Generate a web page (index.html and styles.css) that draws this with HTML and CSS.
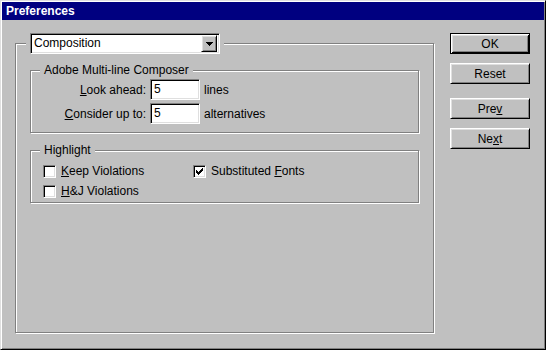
FILE: index.html
```html
<!DOCTYPE html>
<html lang="en">

<head>
  <meta charset="UTF-8">
  <meta name="viewport" content="width=device-width, initial-scale=1.0">
  <title>Preferences</title>
  <link rel="stylesheet" href="styles.css">
</head>

<body>
  <div class="window">
    <div class="title">Preferences</div>

    <div class="content">
      <fieldset class="panel">
        <legend class="panel-legend">
          <div class="select sunken">
            <span class="select-text">Composition</span>
            <span class="select-btn raised">
              <svg width="7" height="4" viewBox="0 0 7 4" shape-rendering="crispEdges">
                <path d="M0 0h7v1h-1v1h-1v1h-1v1h-1v-1h-1v-1h-1v-1h-1z" fill="#000" />
              </svg>
            </span>
          </div>
        </legend>

        <fieldset class="group">
          <legend class="group-legend">Adobe Multi-line Composer</legend>
          <div class="fields">
            <label class="field-label"><u>L</u>ook ahead:</label>
            <div class="field sunken">5</div>
            <span class="unit">lines</span>

            <label class="field-label"><u>C</u>onsider up to:</label>
            <div class="field sunken">5</div>
            <span class="unit">alternatives</span>
          </div>
        </fieldset>

        <fieldset class="group group-highlight">
          <legend class="group-legend">Highlight</legend>
          <div class="checks">
            <div class="check-row">
              <span class="check sunken"></span>
              <span><u>K</u>eep Violations</span>
            </div>
            <div class="check-row">
              <span class="check sunken">
                <svg width="7" height="7" viewBox="0 0 7 7" shape-rendering="crispEdges">
                  <path d="M6 0h1v1h-1z M5 1h2v1h-2z M0 2h1v1h-1z M4 2h3v1h-3z M0 3h2v1h-2z M3 3h3v1h-3z M0 4h5v1h-5z M1 5h3v1h-3z M2 6h1v1h-1z" fill="#000" />
                </svg>
              </span>
              <span>Substituted <u>F</u>onts</span>
            </div>
            <div class="check-row">
              <span class="check sunken"></span>
              <span><u>H</u>&amp;J Violations</span>
            </div>
          </div>
        </fieldset>
      </fieldset>

      <div class="buttons">
        <button class="btn btn-default">OK</button>
        <button class="btn">Reset</button>
        <button class="btn btn-gap">Pre<u>v</u></button>
        <button class="btn">Ne<u>x</u>t</button>
      </div>
    </div>
  </div>
</body>

</html>
```

FILE: styles.css
```css
* {
  margin: 0;
  padding: 0;
  box-sizing: border-box;
}

body {
  font-family: "Liberation Sans", Arial, sans-serif;
  font-size: 12px;
  color: #000;
  background: #c0c0c0;
}

.window {
  width: 546px;
  height: 350px;
  display: flex;
  flex-direction: column;
  padding: 1px;
  background: #c0c0c0;
  border: 1px solid;
  border-color: #dfdfdf #000 #000 #dfdfdf;
  box-shadow: inset 1px 1px #fff, inset -1px -1px #808080;
}

.title {
  height: 18px;
  line-height: 18px;
  padding-left: 4px;
  background: #000080;
  color: #fff;
  font-weight: bold;
  font-size: 12px;
}

.content {
  flex: 1;
  display: flex;
  gap: 16px;
  padding: 13px 14px 15px 13px;
}

/* win98 bevels */
.raised {
  border: 1px solid;
  border-color: #fff #000 #000 #fff;
  box-shadow: inset 1px 1px #dfdfdf, inset -1px -1px #808080;
}

.sunken {
  border: 1px solid;
  border-color: #808080 #fff #fff #808080;
  box-shadow: inset 1px 1px #000, inset -1px -1px #dfdfdf;
  background: #fff;
}

/* outer panel with the dropdown as its legend */
.panel {
  flex: 0 0 419px;
  min-width: 0;
  padding: 0 14px;
  border: 1px solid #808080;
  box-shadow: inset 1px 1px #fff, 1px 1px #fff;
}

.panel-legend {
  margin-left: -4px;
  padding: 0 4px;
  background: #c0c0c0;
}

.select {
  width: 190px;
  height: 21px;
  display: flex;
  align-items: center;
  padding: 2px;
}

.select-text {
  flex: 1;
  padding-left: 1px;
  line-height: 17px;
}

.select-btn {
  width: 16px;
  height: 17px;
  display: flex;
  align-items: center;
  justify-content: center;
  background: #c0c0c0;
}

.select-btn svg {
  display: block;
  margin-top: 1px;
}

/* inner groups */
.group {
  margin-top: 9px;
  padding: 2px 0 8px;
  border: 1px solid #808080;
  box-shadow: inset 1px 1px #fff, 1px 1px #fff;
}

.group-highlight {
  margin-top: 10px;
  padding: 8px 0 4px;
}

.group-legend {
  margin-left: 9px;
  padding: 0 4px;
  line-height: 14px;
  background: #c0c0c0;
}

.fields {
  display: grid;
  grid-template-columns: 115px 50px auto;
  grid-auto-rows: 21px;
  column-gap: 4px;
  row-gap: 3px;
  align-items: center;
}

.field-label {
  text-align: right;
}

.field {
  height: 21px;
  padding: 0 3px;
  line-height: 19px;
}

.checks {
  display: grid;
  grid-template-columns: 150px auto;
  grid-auto-rows: 13px;
  row-gap: 7px;
  margin-left: 12px;
}

.check-row {
  display: flex;
  align-items: center;
  gap: 5px;
  line-height: 13px;
}

.check {
  width: 13px;
  height: 13px;
  display: flex;
  align-items: center;
  justify-content: center;
}

.check svg {
  display: block;
}

/* dialog buttons */
.buttons {
  width: 80px;
  display: flex;
  flex-direction: column;
  gap: 9px;
}

.btn {
  width: 80px;
  height: 21px;
  font-family: inherit;
  font-size: 12px;
  color: #000;
  background: #c0c0c0;
  border: 1px solid;
  border-color: #fff #000 #000 #fff;
  box-shadow: inset 1px 1px #dfdfdf, inset -1px -1px #808080;
}

.btn-default {
  border-color: #000;
  box-shadow: inset 1px 1px #fff, inset -1px -1px #000, inset 2px 2px #dfdfdf, inset -2px -2px #808080;
}

.btn-gap {
  margin-top: 5px;
}
```
